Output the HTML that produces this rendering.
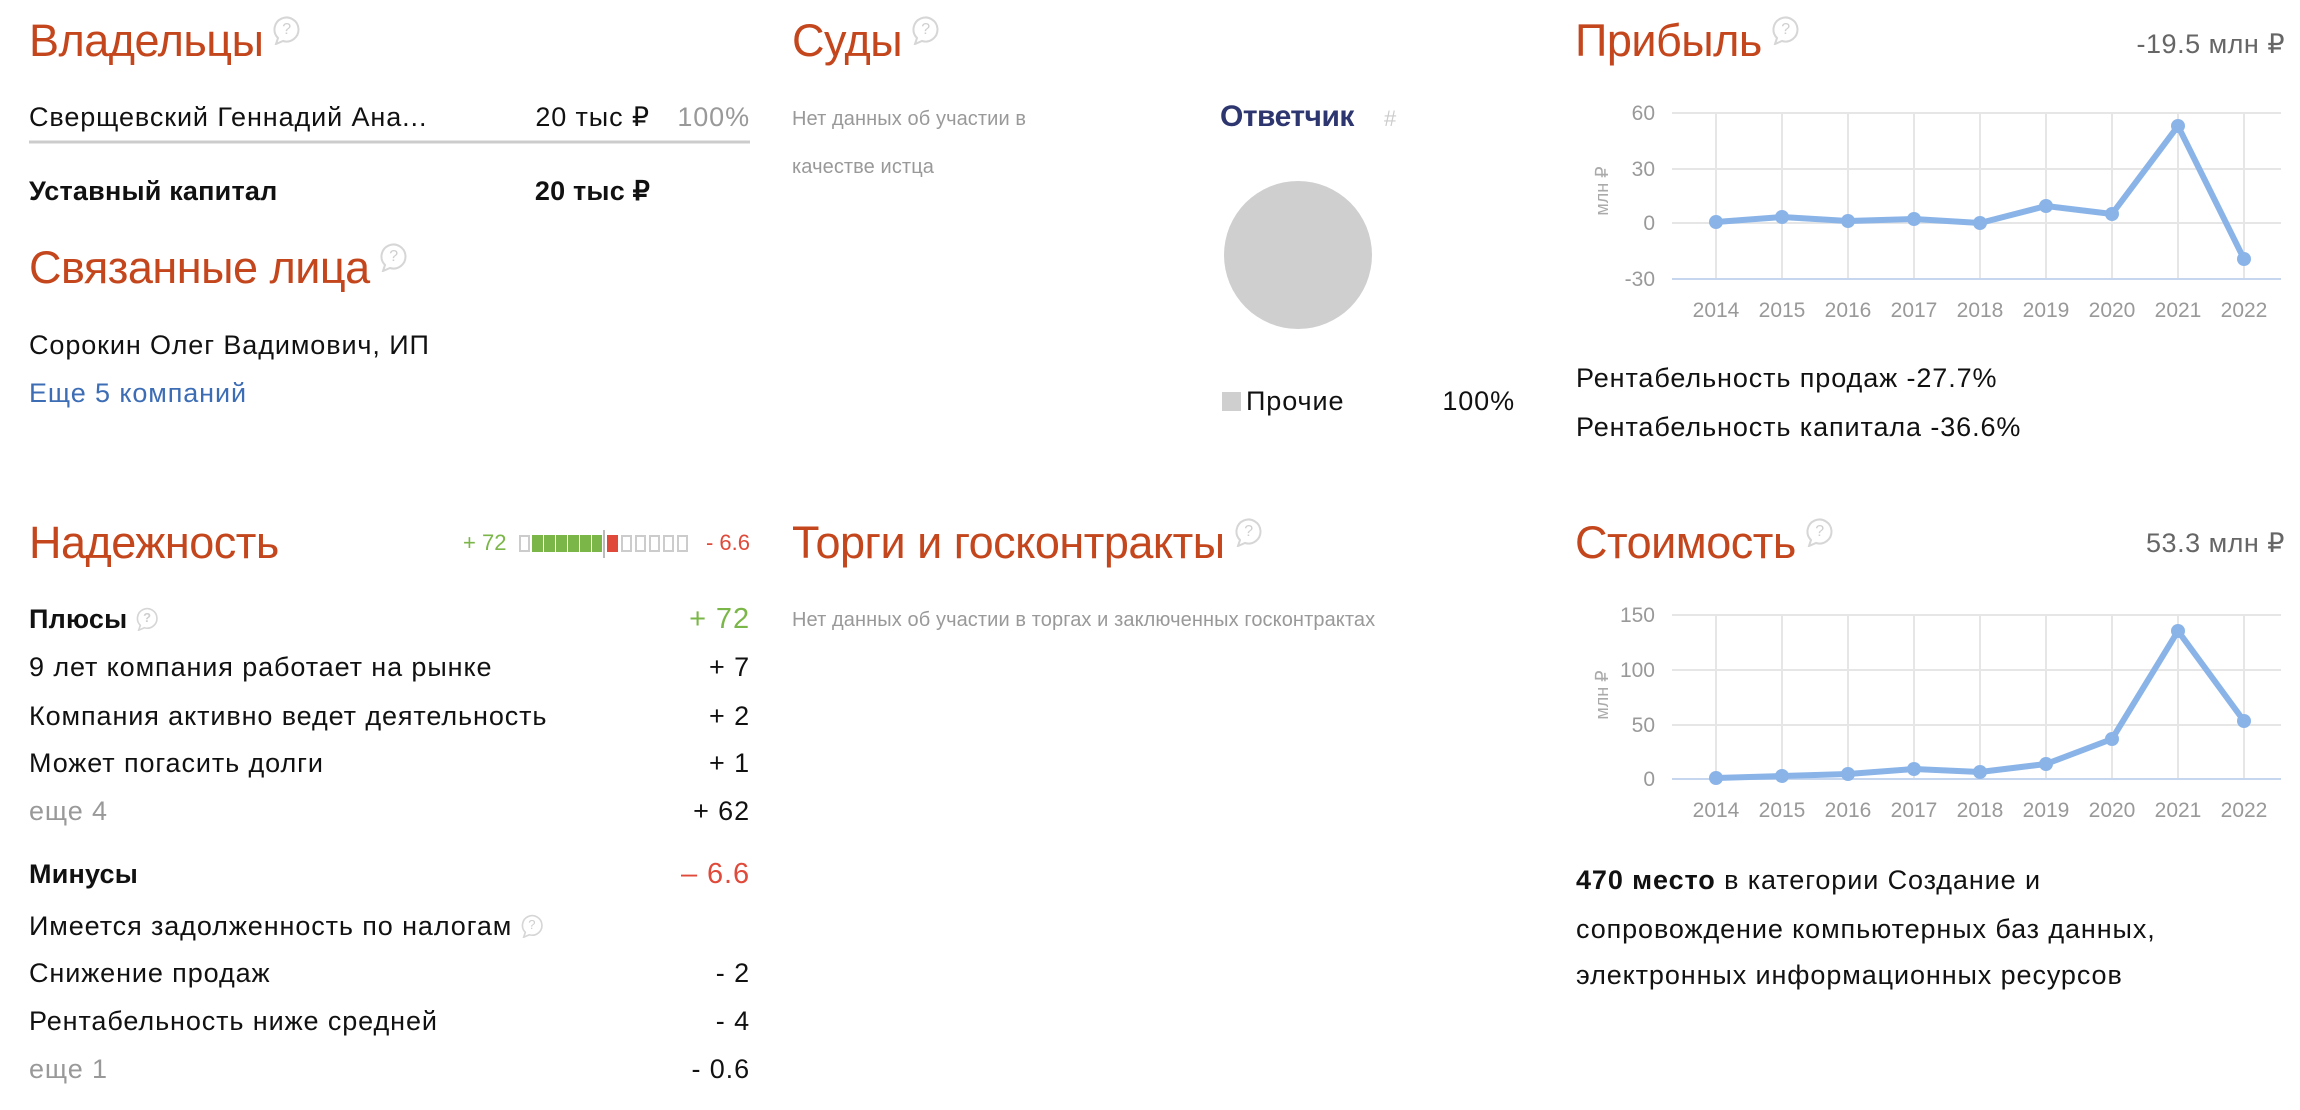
<!DOCTYPE html>
<html><head><meta charset="utf-8"><style>
*{margin:0;padding:0;box-sizing:border-box}
body{width:2300px;height:1110px;background:#fff;position:relative;overflow:hidden;font-family:"Liberation Sans","Noto Sans CJK SC",sans-serif;color:#111}
.t{position:absolute;white-space:nowrap;line-height:40px;font-size:27px;letter-spacing:0.9px}
.h{position:absolute;white-space:nowrap;line-height:60px;font-size:45px;color:#c4461d;letter-spacing:-0.5px}
.r{text-align:right}
.g{color:#999}
.s{font-size:20px;color:#999;line-height:30px;letter-spacing:0.1px}
.b{font-weight:bold;letter-spacing:0.2px}
.q{display:inline-block;width:32px;height:32px;vertical-align:top;margin-left:6px;margin-top:2px}
.qs{width:26px;height:26px;margin-top:6px}
.box{position:absolute;top:535px;width:11px;height:17px}
</style></head><body>
<svg width="0" height="0" style="position:absolute"><defs>
<symbol id="qm" viewBox="0 0 32 32"><path d="M9 25 A12 12 0 1 1 14 28 L7 31 Z" fill="none" stroke="#d6d6d6" stroke-width="2"/><text x="17.5" y="21" font-size="16" fill="#cfcfcf" text-anchor="middle" font-family="Liberation Sans">?</text></symbol>
</defs></svg>

<svg width="2300" height="1110" style="position:absolute;left:0;top:0">
<g stroke="#e6e6e6" stroke-width="2">
<line x1="1672" y1="113" x2="2281" y2="113"/><line x1="1672" y1="169" x2="2281" y2="169"/><line x1="1672" y1="223" x2="2281" y2="223"/>
<line x1="1716" y1="113" x2="1716" y2="279"/><line x1="1782" y1="113" x2="1782" y2="279"/><line x1="1848" y1="113" x2="1848" y2="279"/><line x1="1914" y1="113" x2="1914" y2="279"/><line x1="1980" y1="113" x2="1980" y2="279"/><line x1="2046" y1="113" x2="2046" y2="279"/><line x1="2112" y1="113" x2="2112" y2="279"/><line x1="2178" y1="113" x2="2178" y2="279"/><line x1="2244" y1="113" x2="2244" y2="279"/>
<line x1="1672" y1="615" x2="2281" y2="615"/><line x1="1672" y1="670" x2="2281" y2="670"/><line x1="1672" y1="725" x2="2281" y2="725"/>
<line x1="1716" y1="615" x2="1716" y2="779"/><line x1="1782" y1="615" x2="1782" y2="779"/><line x1="1848" y1="615" x2="1848" y2="779"/><line x1="1914" y1="615" x2="1914" y2="779"/><line x1="1980" y1="615" x2="1980" y2="779"/><line x1="2046" y1="615" x2="2046" y2="779"/><line x1="2112" y1="615" x2="2112" y2="779"/><line x1="2178" y1="615" x2="2178" y2="779"/><line x1="2244" y1="615" x2="2244" y2="779"/>
</g>
<line x1="1672" y1="279" x2="2281" y2="279" stroke="#c6d6ef" stroke-width="2"/>
<line x1="1672" y1="779" x2="2281" y2="779" stroke="#c6d6ef" stroke-width="2"/>
<g font-family="Liberation Sans" font-size="21" fill="#999" text-anchor="end">
<text x="1655" y="120">60</text><text x="1655" y="176">30</text><text x="1655" y="230">0</text><text x="1655" y="286">-30</text>
<text x="1655" y="622">150</text><text x="1655" y="677">100</text><text x="1655" y="732">50</text><text x="1655" y="786">0</text>
</g>
<g font-family="Liberation Sans" font-size="21" fill="#999" text-anchor="middle">
<text x="1716" y="317">2014</text><text x="1782" y="317">2015</text><text x="1848" y="317">2016</text><text x="1914" y="317">2017</text><text x="1980" y="317">2018</text><text x="2046" y="317">2019</text><text x="2112" y="317">2020</text><text x="2178" y="317">2021</text><text x="2244" y="317">2022</text>
<text x="1716" y="817">2014</text><text x="1782" y="817">2015</text><text x="1848" y="817">2016</text><text x="1914" y="817">2017</text><text x="1980" y="817">2018</text><text x="2046" y="817">2019</text><text x="2112" y="817">2020</text><text x="2178" y="817">2021</text><text x="2244" y="817">2022</text>
</g>
<text transform="translate(1608,191) rotate(-90)" font-family="Liberation Sans" font-size="18" fill="#aaa" text-anchor="middle">млн ₽</text>
<text transform="translate(1608,695) rotate(-90)" font-family="Liberation Sans" font-size="18" fill="#aaa" text-anchor="middle">млн ₽</text>
<g fill="none" stroke="#8ab4e8" stroke-width="6" stroke-linejoin="round">
<polyline points="1716,222 1782,217 1848,221 1914,219 1980,223 2046,206 2112,214 2178,126 2244,259"/>
<polyline points="1716,778 1782,776 1848,774 1914,769 1980,772 2046,764 2112,739 2178,631 2244,721"/>
</g>
<g fill="#8ab4e8">
<circle cx="1716" cy="222" r="7"/><circle cx="1782" cy="217" r="7"/><circle cx="1848" cy="221" r="7"/><circle cx="1914" cy="219" r="7"/><circle cx="1980" cy="223" r="7"/><circle cx="2046" cy="206" r="7"/><circle cx="2112" cy="214" r="7"/><circle cx="2178" cy="126" r="7"/><circle cx="2244" cy="259" r="7"/>
<circle cx="1716" cy="778" r="7"/><circle cx="1782" cy="776" r="7"/><circle cx="1848" cy="774" r="7"/><circle cx="1914" cy="769" r="7"/><circle cx="1980" cy="772" r="7"/><circle cx="2046" cy="764" r="7"/><circle cx="2112" cy="739" r="7"/><circle cx="2178" cy="631" r="7"/><circle cx="2244" cy="721" r="7"/>
</g>
<circle cx="1298" cy="255" r="74" fill="#cfcfcf"/>
<rect x="1222" y="392" width="19" height="19" fill="#cfcfcf"/>
<line x1="29" y1="142" x2="750" y2="142" stroke="#ccc" stroke-width="3"/>
</svg>

<div class="h" style="left:29px;top:11px">Владельцы<svg class="q"><use href="#qm"/></svg></div>
<div class="t" style="left:29px;top:97px">Сверщевский Геннадий Ана...</div>
<div class="t r" style="left:500px;width:150px;top:97px">20 тыс ₽</div>
<div class="t r g" style="left:650px;width:100px;top:97px">100%</div>
<div class="t b" style="left:29px;top:171px">Уставный капитал</div>
<div class="t r b" style="left:500px;width:150px;top:171px">20 тыс ₽</div>
<div class="h" style="left:29px;top:238px">Связанные лица<svg class="q"><use href="#qm"/></svg></div>
<div class="t" style="left:29px;top:325px">Сорокин Олег Вадимович, ИП</div>
<div class="t" style="left:29px;top:373px;color:#3d6db5">Еще 5 компаний</div>

<div class="h" style="left:29px;top:513px">Надежность</div>
<div class="t" style="left:463px;top:523px;font-size:22px;color:#7ab648;letter-spacing:0">+ 72</div>
<div class="box" style="left:519px;border:2px solid #ccc"></div>
<div class="box" style="left:532px;background:#7ab648"></div>
<div class="box" style="left:544px;background:#7ab648"></div>
<div class="box" style="left:556px;background:#7ab648"></div>
<div class="box" style="left:568px;background:#7ab648"></div>
<div class="box" style="left:580px;background:#7ab648"></div>
<div class="box" style="left:592px;background:#7ab648;width:10px"></div>
<div style="position:absolute;left:603px;top:530px;width:2px;height:28px;background:#bbb"></div>
<div class="box" style="left:607px;background:#e04a3a"></div>
<div class="box" style="left:621px;border:2px solid #ccc"></div>
<div class="box" style="left:635px;border:2px solid #ccc"></div>
<div class="box" style="left:649px;border:2px solid #ccc"></div>
<div class="box" style="left:663px;border:2px solid #ccc"></div>
<div class="box" style="left:677px;border:2px solid #ccc"></div>
<div class="t r" style="left:650px;width:100px;top:523px;font-size:22px;color:#e04a3a;letter-spacing:0">- 6.6</div>

<div class="t b" style="left:29px;top:599px">Плюсы<svg class="q qs"><use href="#qm"/></svg></div>
<div class="t r" style="left:600px;width:150px;top:599px;color:#7ab648;font-size:29px">+ 72</div>
<div class="t" style="left:29px;top:647px">9 лет компания работает на рынке</div><div class="t r" style="left:600px;width:150px;top:647px">+ 7</div>
<div class="t" style="left:29px;top:696px">Компания активно ведет деятельность</div><div class="t r" style="left:600px;width:150px;top:696px">+ 2</div>
<div class="t" style="left:29px;top:743px">Может погасить долги</div><div class="t r" style="left:600px;width:150px;top:743px">+ 1</div>
<div class="t g" style="left:29px;top:791px">еще 4</div><div class="t r" style="left:600px;width:150px;top:791px">+ 62</div>
<div class="t b" style="left:29px;top:854px">Минусы</div>
<div class="t r" style="left:600px;width:150px;top:854px;color:#e04a3a;font-size:29px">– 6.6</div>
<div class="t" style="left:29px;top:906px">Имеется задолженность по налогам<svg class="q qs"><use href="#qm"/></svg></div>
<div class="t" style="left:29px;top:953px">Снижение продаж</div><div class="t r" style="left:600px;width:150px;top:953px">- 2</div>
<div class="t" style="left:29px;top:1001px">Рентабельность ниже средней</div><div class="t r" style="left:600px;width:150px;top:1001px">- 4</div>
<div class="t g" style="left:29px;top:1049px">еще 1</div><div class="t r" style="left:600px;width:150px;top:1049px">- 0.6</div>

<div class="h" style="left:792px;top:11px">Суды<svg class="q"><use href="#qm"/></svg></div>
<div class="t s" style="left:792px;top:104px">Нет данных об участии в</div>
<div class="t s" style="left:792px;top:152px">качестве истца</div>
<div class="t" style="left:1220px;top:97px;font-weight:bold;font-size:30px;color:#2e3670;letter-spacing:-0.5px">Ответчик</div>
<div class="t" style="left:1384px;top:99px;font-size:22px;color:#ccc">#</div>
<div class="t" style="left:1246px;top:381px">Прочие</div>
<div class="t r" style="left:1400px;width:115px;top:381px">100%</div>
<div class="h" style="left:792px;top:513px">Торги и госконтракты<svg class="q"><use href="#qm"/></svg></div>
<div class="t s" style="left:792px;top:605px">Нет данных об участии в торгах и заключенных госконтрактах</div>

<div class="h" style="left:1575px;top:11px">Прибыль<svg class="q"><use href="#qm"/></svg></div>
<div class="t r" style="left:2000px;width:285px;top:24px;color:#666;letter-spacing:0.5px">-19.5 млн ₽</div>
<div class="t" style="left:1576px;top:358px">Рентабельность продаж -27.7%</div>
<div class="t" style="left:1576px;top:407px">Рентабельность капитала -36.6%</div>
<div class="h" style="left:1575px;top:513px">Стоимость<svg class="q"><use href="#qm"/></svg></div>
<div class="t r" style="left:2000px;width:285px;top:523px;color:#666;letter-spacing:0.5px">53.3 млн ₽</div>
<div class="t" style="left:1576px;top:860px"><b>470 место</b> в категории Создание и</div>
<div class="t" style="left:1576px;top:909px">сопровождение компьютерных баз данных,</div>
<div class="t" style="left:1576px;top:955px">электронных информационных ресурсов</div>
</body></html>
